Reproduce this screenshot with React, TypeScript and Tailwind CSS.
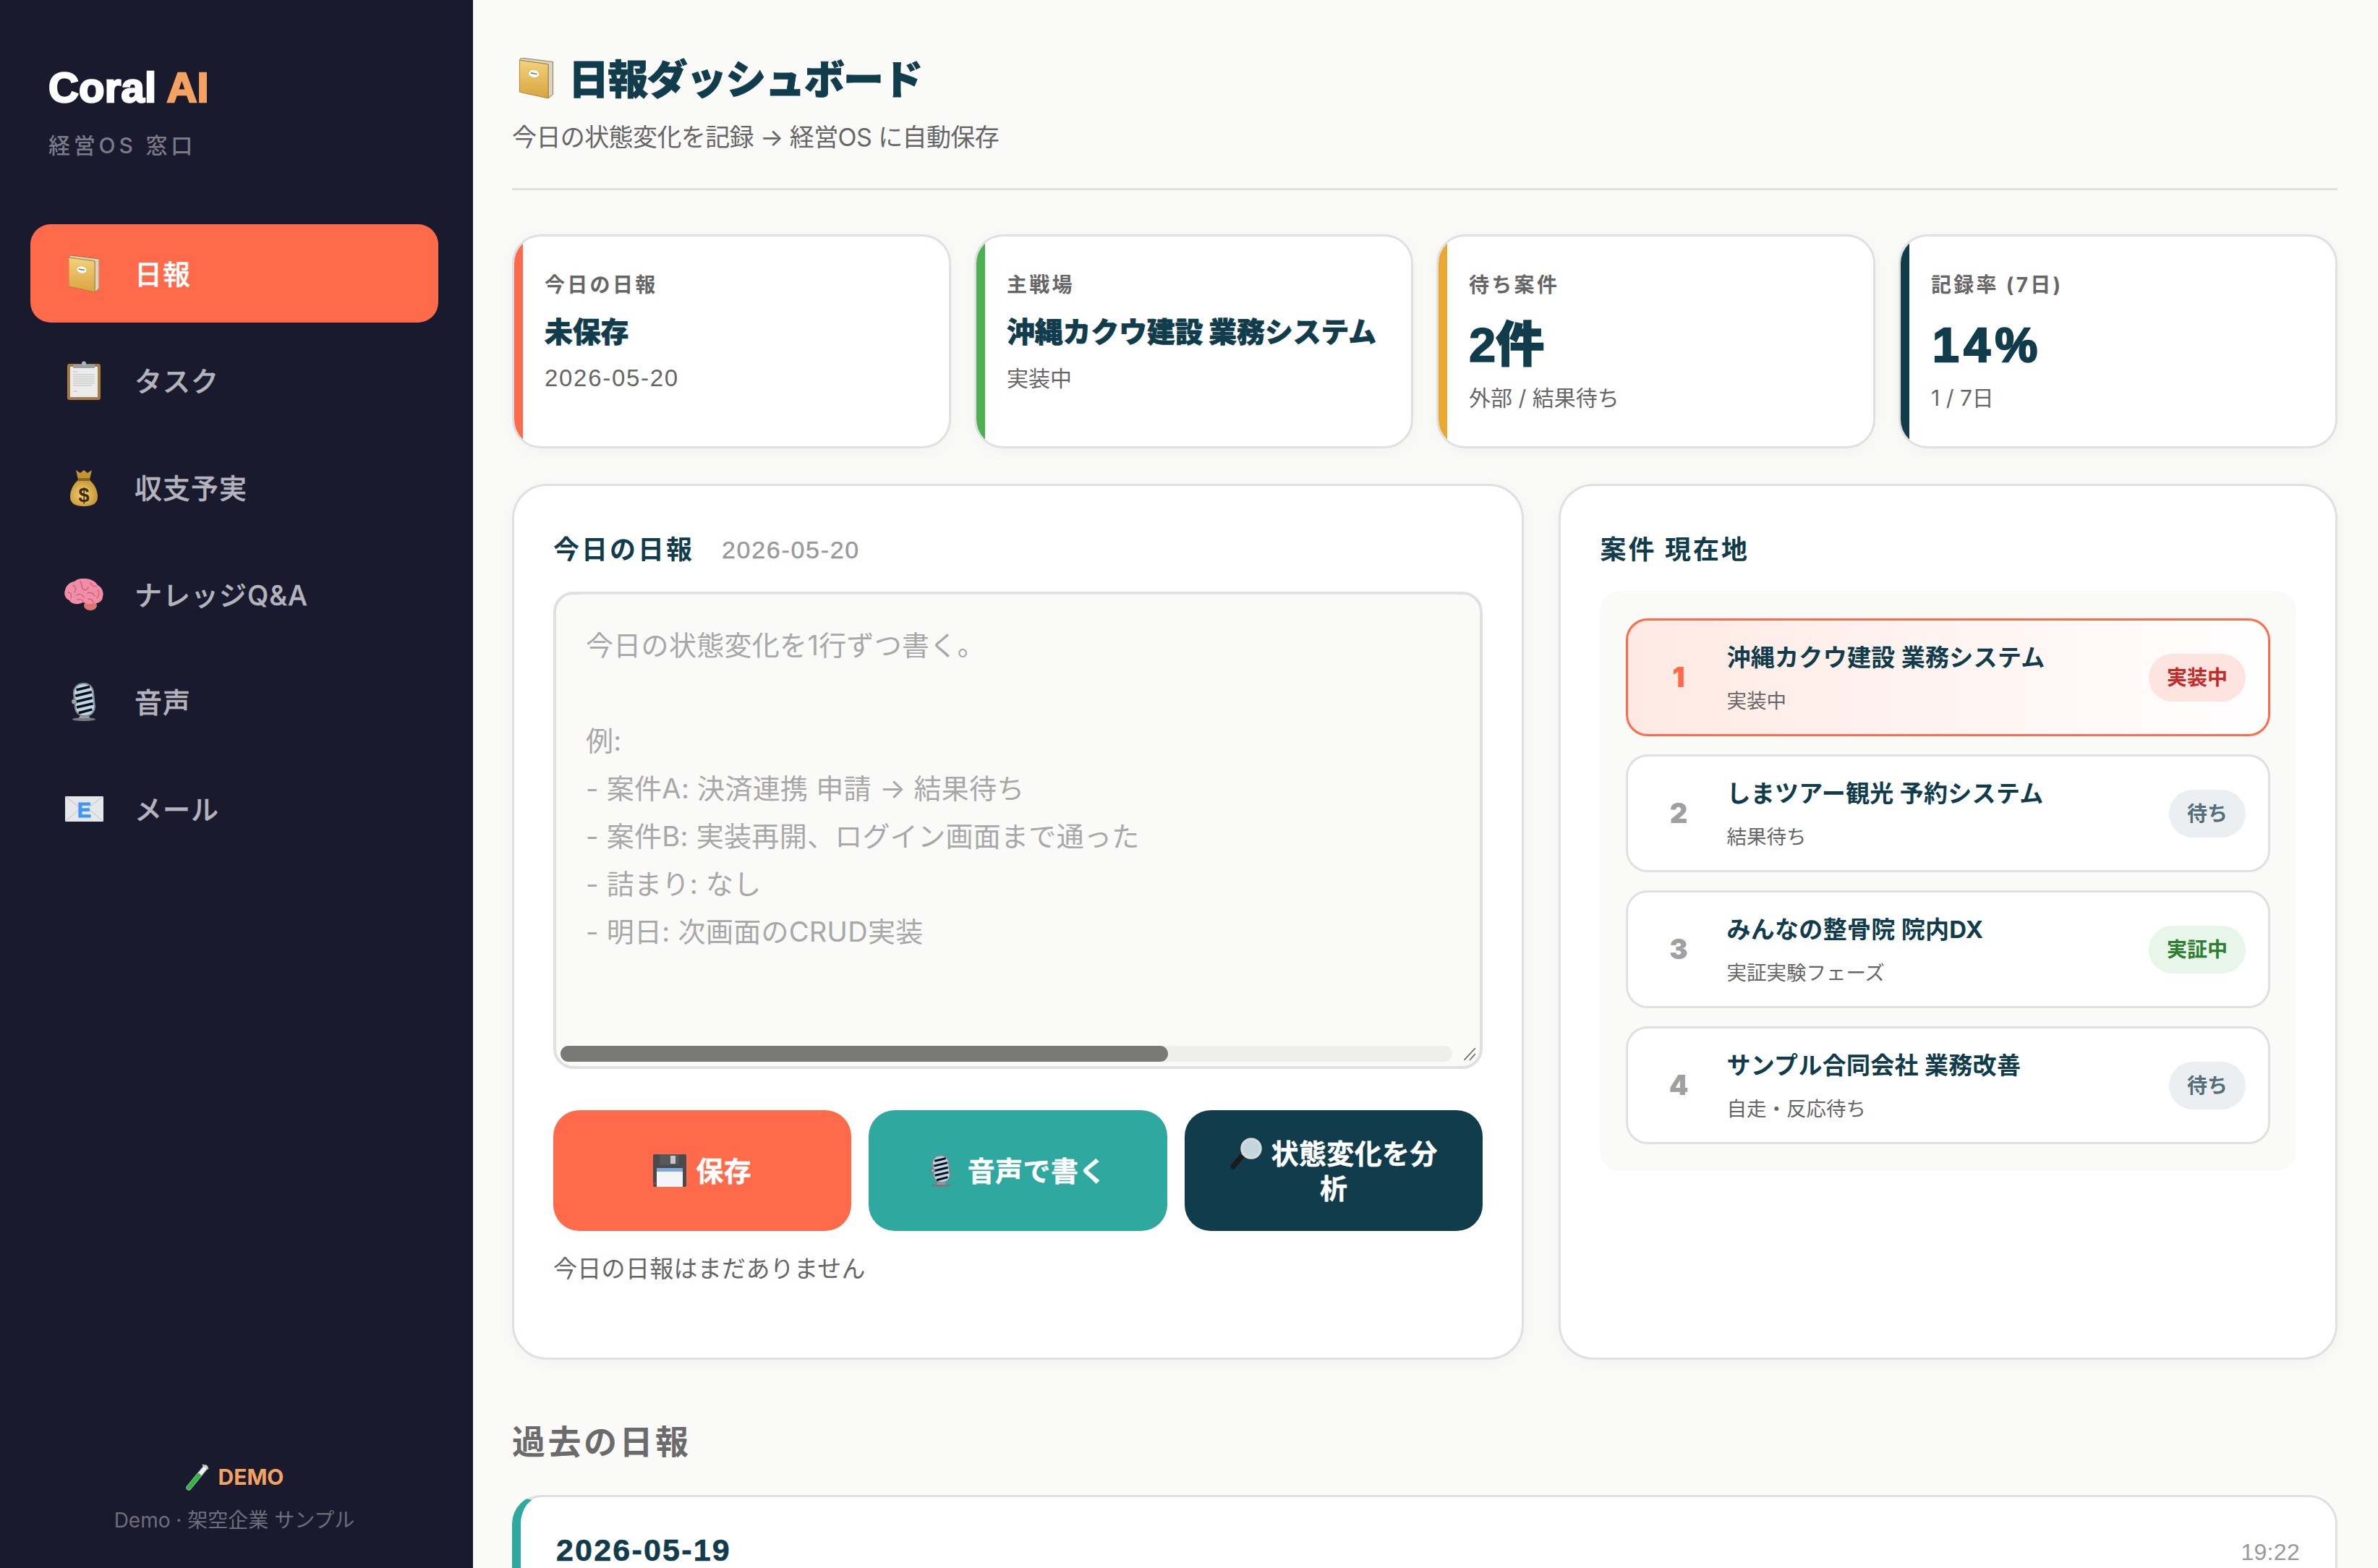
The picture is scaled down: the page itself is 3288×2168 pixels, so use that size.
import React from 'react';

// Emoji drawings (no colour emoji font in the sandbox)
function Ledger({ className }: { className: string }) {
  return (
    <svg viewBox="0 0 42 51" className={className}>
      <defs>
        <linearGradient id="ledgerCover" x1="0" y1="0" x2="0" y2="1">
          <stop offset="0" stopColor="#f3d27a" />
          <stop offset="1" stopColor="#d9a441" />
        </linearGradient>
      </defs>
      <polygon points="2,0 42,5 42,46 36,51 36,8 0,3" fill="#d8d4c8" stroke="#8a6a2a" strokeWidth="0.8" />
      <polygon points="0,3 36,8 36,51 0,43" fill="url(#ledgerCover)" stroke="#a87a26" strokeWidth="0.8" />
      <ellipse cx="18" cy="20" rx="6.5" ry="4.5" fill="#fff" transform="rotate(10 18 20)" />
      <rect x="14" y="19" width="8" height="1.6" fill="#777" transform="rotate(10 18 20)" />
    </svg>
  );
}

function Clipboard({ className }: { className: string }) {
  return (
    <svg viewBox="0 0 46 54" className={className}>
      <rect x="0" y="4" width="46" height="50" rx="3" fill="#a67c45" />
      <rect x="4" y="8" width="38" height="42" fill="#ececec" />
      <rect x="8" y="5" width="30" height="5" rx="1" fill="#9aa0a8" />
      <circle cx="23" cy="3.5" r="3" fill="#aeb4bc" />
      <g stroke="#bdbdbd" strokeWidth="1">
        <line x1="8" y1="15" x2="14" y2="15" />
        <line x1="8" y1="19" x2="38" y2="19" />
        <line x1="8" y1="22" x2="38" y2="22" />
        <line x1="8" y1="25" x2="38" y2="25" />
        <line x1="8" y1="28" x2="38" y2="28" />
        <line x1="8" y1="31" x2="38" y2="31" />
        <line x1="8" y1="34" x2="34" y2="34" />
        <line x1="8" y1="42" x2="14" y2="42" />
      </g>
    </svg>
  );
}

function MoneyBag({ className }: { className: string }) {
  return (
    <svg viewBox="0 0 38 51" className={className}>
      <defs>
        <radialGradient id="bagGold" cx="0.45" cy="0.55" r="0.7">
          <stop offset="0" stopColor="#f6d370" />
          <stop offset="1" stopColor="#b9862a" />
        </radialGradient>
      </defs>
      <path d="M8 1 L14 5 L19 1 L24 5 L30 1 L27 14 L11 14 Z" fill="#c4952f" />
      <path d="M12 14 C2 22 0 32 0 38 C0 47 7 51 19 51 C31 51 38 47 38 38 C38 32 36 22 26 14 Z" fill="url(#bagGold)" />
      <rect x="10.5" y="12" width="17" height="4" rx="2" fill="#8a6420" />
      <text x="19" y="45" textAnchor="middle" fontSize="27" fontWeight="700" fontFamily="Liberation Sans" fill="#3a2a10">$</text>
    </svg>
  );
}

function Brain({ className }: { className: string }) {
  return (
    <svg viewBox="0 0 54 44" className={className}>
      <ellipse cx="36" cy="37" rx="9" ry="7" fill="#d9776f" />
      <path d="M24 0 C34 -1 43 3 46 9 C52 12 55 19 53 25 C53 31 47 35 41 34 C35 37 29 33 25 33 C19 37 9 35 7 30 C1 28 -1 21 1 16 C2 9 9 4 14 4 C17 1 20 0 24 0 Z" fill="#f08ea6" />
      <g fill="none" stroke="#cf5f80" strokeWidth="1.4" strokeLinecap="round">
        <path d="M12 9 C16 11 17 15 14 19" />
        <path d="M22 4 C25 8 23 12 26 15 C29 17 32 15 33 12" />
        <path d="M36 6 C38 10 41 11 44 11" />
        <path d="M5 19 C9 19 11 23 9 27" />
        <path d="M17 23 C21 20 25 22 27 26" />
        <path d="M32 20 C36 18 40 20 42 24" />
        <path d="M46 16 C49 19 48 24 45 27" />
        <path d="M18 29 C22 28 25 30 26 32" />
        <path d="M33 28 C36 28 39 29 40 33" />
      </g>
    </svg>
  );
}

function Mic({ className }: { className: string }) {
  return (
    <svg viewBox="0 0 36 53" className={className}>
      <ellipse cx="18" cy="50.5" rx="16" ry="2.5" fill="#77797c" />
      <path d="M14 42 L24 42 L26 49 L11 49 Z" fill="#9a9c9f" />
      <g transform="rotate(-6 18 24)">
        <rect x="5" y="1" width="27" height="45" rx="12.5" fill="#b9d6ee" stroke="#85888c" strokeWidth="2" />
        <g stroke="#0d0d0d" strokeWidth="3.6">
          <line x1="9" y1="9" x2="28" y2="6.5" />
          <line x1="7" y1="17" x2="30" y2="14" />
          <line x1="7" y1="25" x2="30" y2="22" />
          <line x1="7" y1="33" x2="30" y2="30" />
          <line x1="9" y1="41" x2="28" y2="38" />
        </g>
      </g>
      <circle cx="4.5" cy="26" r="3.5" fill="#a4a6aa" stroke="#55575a" strokeWidth="0.8" />
    </svg>
  );
}

function Envelope({ className }: { className: string }) {
  return (
    <svg viewBox="0 0 53 35" className={className}>
      <rect x="0" y="0" width="53" height="35" rx="1" fill="#e6e7e9" />
      <path d="M0 0 L26.5 20 L53 0 M0 35 L22 16 M53 35 L31 16" fill="none" stroke="#b9bcc0" strokeWidth="0.9" />
      <text x="26.5" y="29" textAnchor="middle" fontSize="29" fontWeight="700" fontFamily="Liberation Sans" fill="#3f97f2" stroke="#3f97f2" strokeWidth="0.8">E</text>
    </svg>
  );
}

function TestTube({ className }: { className: string }) {
  return (
    <svg viewBox="0 0 33 37" className={className}>
      <line x1="5" y1="33" x2="28" y2="5" stroke="#8f9696" strokeWidth="7.5" strokeLinecap="round" />
      <line x1="5" y1="33" x2="28" y2="5" stroke="#eef1f1" strokeWidth="5.5" strokeLinecap="round" />
      <line x1="5" y1="33" x2="19" y2="16" stroke="#2cb93a" strokeWidth="5.5" strokeLinecap="round" />
      <line x1="24" y1="1" x2="32" y2="7" stroke="#c9cfcf" strokeWidth="2" />
    </svg>
  );
}

function Floppy({ className }: { className: string }) {
  return (
    <svg viewBox="0 0 46 45" className={className}>
      <rect x="0" y="0" width="46" height="45" rx="2" fill="#4a4a4c" />
      <rect x="9" y="0" width="27" height="15" fill="#57575a" />
      <rect x="24" y="2" width="7" height="11" fill="#c5c7ca" />
      <rect x="5" y="19" width="36" height="26" fill="#f4f5f7" />
      <rect x="5" y="19" width="36" height="5" fill="#7fa8dc" />
      <rect x="0.5" y="39" width="3" height="3" fill="#c0392b" />
    </svg>
  );
}

function Magnifier({ className }: { className: string }) {
  return (
    <svg viewBox="0 0 45 44" className={className}>
      <line x1="4" y1="40" x2="17" y2="24" stroke="#1b1b1b" strokeWidth="7" strokeLinecap="round" />
      <line x1="17" y1="24" x2="21" y2="19" stroke="#a8abae" strokeWidth="5" />
      <circle cx="29" cy="15" r="13" fill="#c3d6de" stroke="#d7d9db" strokeWidth="3.5" />
    </svg>
  );
}

const nav = [
  { label: '日報', icon: <Ledger className="w-[42px] h-[51px]" />, active: true },
  { label: 'タスク', icon: <Clipboard className="w-[46px] h-[54px]" /> },
  { label: '収支予実', icon: <MoneyBag className="w-[38px] h-[51px]" /> },
  { label: 'ナレッジQ&A', icon: <Brain className="w-[54px] h-[44px]" /> },
  { label: '音声', icon: <Mic className="w-[36px] h-[53px]" /> },
  { label: 'メール', icon: <Envelope className="w-[53px] h-[35px]" /> },
];

const stats = [
  { label: '今日の日報', value: '未保存', sub: '2026-05-20', bar: 'bg-[#ff6b4a]', valueCls: 'text-[38.8px] leading-[64px] font-black [-webkit-text-stroke:0.7px_#113c4b]', subCls: "mt-[10px] font-['Liberation_Sans'] text-[33px] tracking-[1.7px]" },
  { label: '主戦場', value: '沖縄カクウ建設 業務システム', sub: '実装中', bar: 'bg-[#4caf50]', valueCls: 'text-[38.8px] leading-[64px] font-black [-webkit-text-stroke:0.7px_#113c4b]', subCls: 'mt-[10px] text-[30px]' },
  { label: '待ち案件', value: '2件', sub: '外部 / 結果待ち', bar: 'bg-[#e9a830]', valueCls: "font-['Liberation_Sans','Noto_Sans_CJK_JP'] pt-[2px] text-[67px] leading-[96px] font-black [-webkit-text-stroke:1.5px_#113c4b]", subCls: 'mt-[3px] text-[30px]' },
  { label: '記録率 (7日)', value: '14%', sub: '1 / 7日', bar: 'bg-[#113c4b]', valueCls: "font-['Liberation_Sans'] pt-[2px] pl-[2px] text-[66px] leading-[96px] font-bold tracking-[6.5px] [-webkit-text-stroke:2.5px_#113c4b]", subCls: 'mt-[3px] text-[30px]' },
];

const projects = [
  { n: 1, title: '沖縄カクウ建設 業務システム', sub: '実装中', badge: '実装中', badgeCls: 'bg-[#fde4df] text-[#c62828]', active: true },
  { n: 2, title: 'しまツアー観光 予約システム', sub: '結果待ち', badge: '待ち', badgeCls: 'bg-[#eceff1] text-[#546e7a]' },
  { n: 3, title: 'みんなの整骨院 院内DX', sub: '実証実験フェーズ', badge: '実証中', badgeCls: 'bg-[#e8f5e9] text-[#2e7d32]' },
  { n: 4, title: 'サンプル合同会社 業務改善', sub: '自走・反応待ち', badge: '待ち', badgeCls: 'bg-[#eceff1] text-[#546e7a]' },
];

const placeholder = `今日の状態変化を1行ずつ書く。

例:
- 案件A: 決済連携 申請 → 結果待ち
- 案件B: 実装再開、ログイン画面まで通った
- 詰まり: なし
- 明日: 次画面のCRUD実装`;

export default function App() {
  return (
    <div className="flex h-screen overflow-hidden bg-[#fafaf8] font-[Inter,'Noto_Sans_CJK_JP',sans-serif] text-[#113c4b]">
      {/* Sidebar */}
      <aside className="flex w-[654px] shrink-0 flex-col bg-[#1a1a2e]">
        <div className="pl-[67px] pt-[86px]">
          <div className="font-['Liberation_Sans'] text-[58px] leading-[70px] font-bold tracking-[0.2px] text-white [-webkit-text-stroke:2.5px_currentColor]">
            Coral <span className="text-[#f4a261]">AI</span>
          </div>
          <div className="mt-[25px] text-[30px] leading-[40px] font-medium tracking-[4.8px] text-[#7b7b88]">経営OS 窓口</div>
        </div>
        <nav className="ml-[42px] mt-[89px] flex w-[564px] flex-col gap-[12px]">
          {nav.map((item) => (
            <div
              key={item.label}
              className={`flex h-[136px] items-center rounded-[28px] pl-[47px] text-[38px] font-medium [-webkit-text-stroke:0.4px_currentColor] ${item.active ? 'bg-[#ff6b4a] text-white' : 'text-[#b3b3bc]'}`}
            >
              <span className="flex w-[54px] items-center justify-center">{item.icon}</span>
              <span className="ml-[43px] pt-[3px] tracking-[1px]">{item.label}</span>
            </div>
          ))}
        </nav>
        <div className="mt-auto flex flex-col items-center pb-[46px] pr-[6px]">
          <div className="flex h-[40px] items-center gap-[13px] text-[30px] font-bold text-[#f4a261]">
            <TestTube className="w-[33px] h-[37px]" />
            DEMO
          </div>
          <div className="mt-[20px] text-[28px] leading-[40px] text-[#6e6e7a]">Demo · 架空企業 サンプル</div>
        </div>
      </aside>

      {/* Main */}
      <main className="min-w-0 flex-1 pl-[54px] pr-[56px] pt-[80px]">
        <header className="border-b-[3px] border-[#e0e0e0] pb-[48px]">
          <h1 className="flex h-[56px] items-center gap-[20px] pl-[9px] text-[56px] font-black tracking-[-1.7px] [-webkit-text-stroke:0.8px_#113c4b]">
            <Ledger className="w-[49px] h-[56px]" />
            <span className="pt-[3px]">日報ダッシュボード</span>
          </h1>
          <p className="mt-[32px] text-[34px] leading-[44px] tracking-[-0.6px] text-[#666]">今日の状態変化を記録 → 経営OS に自動保存</p>
        </header>

        <section className="mt-[61px] grid h-[296px] grid-cols-4 gap-[32px]">
          {stats.map((s) => (
            <div
              key={s.label}
              className="relative overflow-hidden rounded-[40px] border-[3px] border-[#e0e0e0] bg-white pl-[42px] pt-[44px] shadow-[0_4px_24px_rgba(0,0,0,0.04)]"
            >
              <div className={`absolute inset-y-0 left-0 w-[12px] ${s.bar}`} />
              <div className="pt-[1px] text-[28px] leading-[44px] font-bold tracking-[3.3px] text-[#666]">{s.label}</div>
              <div className={`mt-[11px] whitespace-nowrap ${s.valueCls}`}>{s.value}</div>
              <div className={`leading-[44px] text-[#666] ${s.subCls}`}>{s.sub}</div>
            </div>
          ))}
        </section>

        <section className="mt-[49px] grid h-[1211px] grid-cols-[1.3fr_1fr] gap-[48px]">
          <div className="rounded-[48px] border-[3px] border-[#e0e0e0] bg-white px-[54px] pt-[64px] shadow-[0_4px_24px_rgba(0,0,0,0.04)]">
            <div className="flex h-[48px] items-center gap-[38px]">
              <h2 className="text-[36px] font-bold tracking-[3px]">今日の日報</h2>
              <span className="font-['Liberation_Sans'] text-[34px] tracking-[1.7px] text-[#999] [-webkit-text-stroke:0.4px_#999]">2026-05-20</span>
            </div>
            <div className="relative mt-[34px] h-[660px]">
              <textarea
                placeholder={placeholder}
                readOnly
                className="h-full w-full resize-none overflow-hidden rounded-[28px] border-[4px] border-[#e0e0e0] bg-[#fafaf8] px-[41px] py-[37px] text-[38px] leading-[66px] tracking-[0.3px] outline-none placeholder:text-[#a8a8a8]"
              />
              {/* Scrollbar and resize grip */}
              <div className="absolute bottom-[10px] left-[10px] right-[42px] h-[22px] rounded-full bg-[#eeeeec]">
                <div className="h-full w-[840px] rounded-full bg-[#797977]" />
              </div>
              <svg viewBox="0 0 20 20" className="absolute bottom-[10px] right-[8px] h-[22px] w-[22px]">
                <path d="M4 18 L18 3 M11 18 L18 10" stroke="#666" strokeWidth="1.5" />
              </svg>
            </div>
            <div className="mt-[57px] grid h-[167px] grid-cols-3 gap-[24px] text-[38px] leading-[48px] font-bold tracking-[0.4px] text-white [-webkit-text-stroke:0.4px_#fff]">
              <button className="flex items-center justify-center gap-[13px] rounded-[36px] bg-[#ff6b4a]">
                <Floppy className="w-[46px] h-[45px]" />
                保存
              </button>
              <button className="flex items-center justify-center gap-[22px] rounded-[36px] bg-[#2fa99f]">
                <Mic className="w-[30px] h-[44px]" />
                音声で書く
              </button>
              <button className="rounded-[36px] bg-[#113c4b] text-center">
                <span className="flex items-center justify-center gap-[12px]">
                  <Magnifier className="w-[45px] h-[44px]" />
                  状態変化を分
                </span>
                析
              </button>
            </div>
            <p className="mt-[30px] text-[33px] leading-[44px] tracking-[0.3px] text-[#666]">今日の日報はまだありません</p>
          </div>

          <div className="rounded-[48px] border-[3px] border-[#e0e0e0] bg-white px-[54px] pt-[64px] shadow-[0_4px_24px_rgba(0,0,0,0.04)]">
            <h2 className="text-[36px] leading-[48px] font-bold tracking-[3px]">案件 現在地</h2>
            <div className="mt-[33px] flex flex-col gap-[25px] rounded-[28px] bg-[#fafaf8] px-[36px] pb-[37px] pt-[38px]">
              {projects.map((p) => (
                <div
                  key={p.n}
                  className={`flex h-[163px] items-center rounded-[30px] border-[3px] ${p.active ? 'border-[#ff6b4a] bg-gradient-to-r from-[#ffe9e3] to-white' : 'border-[#e0e0e0] bg-white'}`}
                >
                  <span className={`ml-[3px] w-[133px] text-center text-[38px] font-black ${p.active ? 'text-[#ff6b4a]' : 'text-[#a0a0a0]'}`}>{p.n}</span>
                  <div className="min-w-0 flex-1 pt-[2px]">
                    <div className="text-[33px] leading-[44px] font-bold tracking-[0.3px]">{p.title}</div>
                    <div className="mt-[18px] text-[27.5px] leading-[40px] text-[#666]">{p.sub}</div>
                  </div>
                  <span className={`mr-[31px] flex h-[66px] items-center rounded-full px-[25px] text-[28px] font-bold ${p.badgeCls}`}>{p.badge}</span>
                </div>
              ))}
            </div>
          </div>
        </section>

        <h2 className="mt-[83px] text-[46px] leading-[60px] font-bold tracking-[3.5px] text-[#6b6b6b]">過去の日報</h2>
        <div className="mt-[44px] flex h-[300px] items-start justify-between rounded-[40px] border-[3px] border-l-[12px] border-[#e0e0e0] border-l-[#2fa99f] bg-white pl-[49px] pr-[49px] pt-[45px]">
          <span className="font-['Liberation_Sans'] text-[43px] leading-[56px] font-bold tracking-[2.2px] [-webkit-text-stroke:0.6px_#113c4b]">2026-05-19</span>
          <span className="mt-[3px] font-['Liberation_Sans'] text-[32px] leading-[56px] tracking-[0.3px] text-[#999]">19:22</span>
        </div>
      </main>
    </div>
  );
}
